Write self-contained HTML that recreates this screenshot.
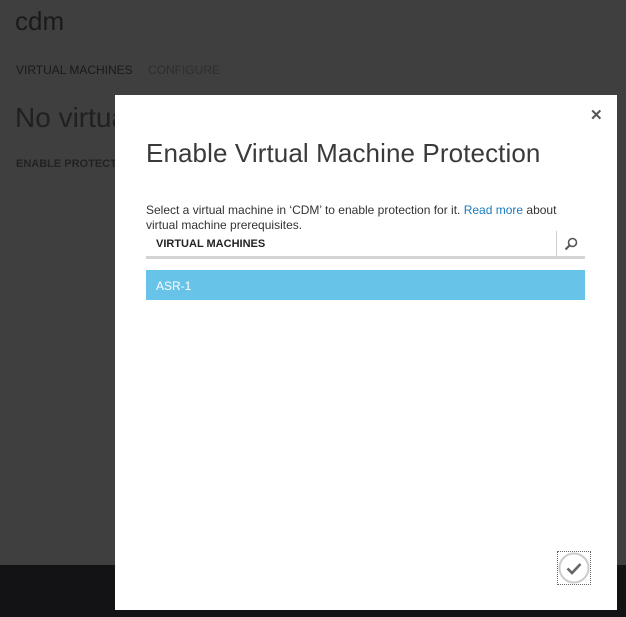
<!DOCTYPE html>
<html><head><meta charset="utf-8"><style>
body{margin:0;width:626px;height:617px;overflow:hidden;background:#3f3f3f;font-family:"Segoe UI","Liberation Sans",sans-serif;position:relative}
.a{position:absolute;white-space:nowrap}
</style></head><body>
<div class="a" style="left:15px;top:6px;font-size:26px;color:#1a1a1a;font-weight:300">cdm</div>
<div class="a" style="left:16px;top:63px;font-size:12px;color:#1a1a1a">VIRTUAL MACHINES</div>
<div class="a" style="left:148px;top:63px;font-size:12px;color:#2e2e2e">CONFIGURE</div>
<div class="a" style="left:15px;top:102px;font-size:28px;color:#202020;font-weight:300">No virtual machines</div>
<div class="a" style="left:16px;top:158px;font-size:11px;color:#222;font-weight:bold">ENABLE PROTECTION</div>
<div class="a" style="left:0;top:565px;width:626px;height:52px;background:#131316"></div>
<div class="a" style="left:115px;top:95px;width:502px;height:515px;background:#fff">
 <div class="a" style="left:475px;top:11px;font-size:15px;color:#555;font-weight:bold">✕</div>
 <div class="a" style="left:31px;top:43px;font-size:26px;color:#3a3a3a;font-weight:300;letter-spacing:0.1px">Enable Virtual Machine Protection</div>
 <div class="a" style="left:31px;top:108px;font-size:12px;color:#333;line-height:15px;white-space:normal;width:440px">Select a virtual machine in ‘CDM’ to enable protection for it. <span style="color:#1a7bbd">Read more</span> about virtual machine prerequisites.</div>
 <div class="a" style="left:41px;top:143px;font-size:11px;color:#222;font-weight:bold">VIRTUAL MACHINES</div>
 <div class="a" style="left:441px;top:136px;width:1px;height:25px;background:#ccc"></div>
 <svg class="a" style="left:449px;top:142px" width="14" height="14" viewBox="0 0 14 14"><circle cx="8.5" cy="5.5" r="4" fill="none" stroke="#555" stroke-width="1.6"/><path d="M5.5 8.5L1.5 12.5" stroke="#555" stroke-width="2"/></svg>
 <div class="a" style="left:31px;top:161px;width:439px;height:3px;background:#d4d4d4"></div>
 <div class="a" style="left:31px;top:175px;width:439px;height:30px;background:#68c3e8"></div>
 <div class="a" style="left:41px;top:184px;font-size:12px;color:#fff">ASR-1</div>
 <div class="a" style="left:442px;top:456px;width:32px;height:32px;border:1px dotted #666"></div>
 <svg class="a" style="left:443px;top:457px" width="32" height="32" viewBox="0 0 32 32"><circle cx="16" cy="16" r="14.5" fill="none" stroke="#ccc" stroke-width="2"/><path d="M9.5 16.5l4.5 4.5 8.5-9" fill="none" stroke="#666" stroke-width="2.6"/></svg>
</div>
</body></html>
